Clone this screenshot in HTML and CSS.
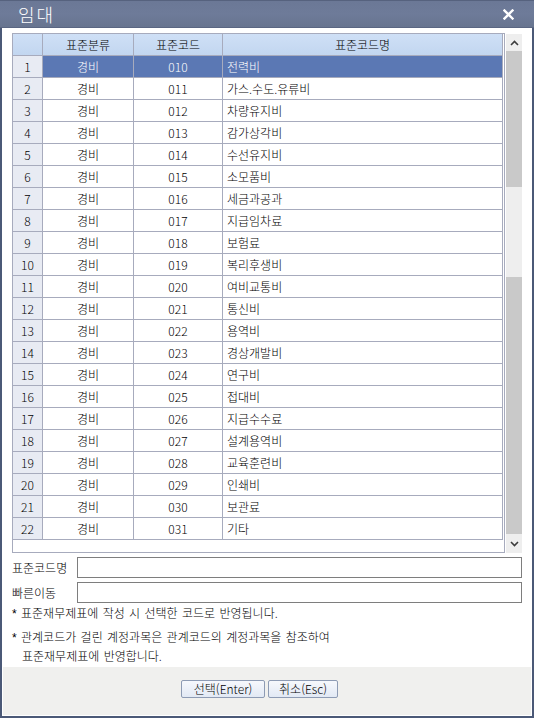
FILE: index.html
```html
<!DOCTYPE html>
<html lang="ko">
<head>
<meta charset="utf-8">
<title>임대</title>
<link rel="stylesheet" href="styles.css">
</head>
<body>
<div class="window">
  <div class="titlebar">
    <span class="title">임대</span>
    <svg class="close" width="11" height="11" viewBox="0 0 11 11"><path d="M1.5 1.5 L9.5 9.5 M9.5 1.5 L1.5 9.5" stroke="#fff" stroke-width="2.4" stroke-linecap="square" fill="none"/></svg>
  </div>
  <div class="body">
    <div class="gridwrap">
      <div class="grid">
        <div class="row head"><div class="c n"></div><div class="c">표준분류</div><div class="c">표준코드</div><div class="c">표준코드명</div></div>
        <div class="row sel"><div class="c n">1</div><div class="c">경비</div><div class="c">010</div><div class="c nm">전력비</div></div>
        <div class="row"><div class="c n">2</div><div class="c">경비</div><div class="c">011</div><div class="c nm">가스.수도.유류비</div></div>
        <div class="row"><div class="c n">3</div><div class="c">경비</div><div class="c">012</div><div class="c nm">차량유지비</div></div>
        <div class="row"><div class="c n">4</div><div class="c">경비</div><div class="c">013</div><div class="c nm">감가상각비</div></div>
        <div class="row"><div class="c n">5</div><div class="c">경비</div><div class="c">014</div><div class="c nm">수선유지비</div></div>
        <div class="row"><div class="c n">6</div><div class="c">경비</div><div class="c">015</div><div class="c nm">소모품비</div></div>
        <div class="row"><div class="c n">7</div><div class="c">경비</div><div class="c">016</div><div class="c nm">세금과공과</div></div>
        <div class="row"><div class="c n">8</div><div class="c">경비</div><div class="c">017</div><div class="c nm">지급임차료</div></div>
        <div class="row"><div class="c n">9</div><div class="c">경비</div><div class="c">018</div><div class="c nm">보험료</div></div>
        <div class="row"><div class="c n">10</div><div class="c">경비</div><div class="c">019</div><div class="c nm">복리후생비</div></div>
        <div class="row"><div class="c n">11</div><div class="c">경비</div><div class="c">020</div><div class="c nm">여비교통비</div></div>
        <div class="row"><div class="c n">12</div><div class="c">경비</div><div class="c">021</div><div class="c nm">통신비</div></div>
        <div class="row"><div class="c n">13</div><div class="c">경비</div><div class="c">022</div><div class="c nm">용역비</div></div>
        <div class="row"><div class="c n">14</div><div class="c">경비</div><div class="c">023</div><div class="c nm">경상개발비</div></div>
        <div class="row"><div class="c n">15</div><div class="c">경비</div><div class="c">024</div><div class="c nm">연구비</div></div>
        <div class="row"><div class="c n">16</div><div class="c">경비</div><div class="c">025</div><div class="c nm">접대비</div></div>
        <div class="row"><div class="c n">17</div><div class="c">경비</div><div class="c">026</div><div class="c nm">지급수수료</div></div>
        <div class="row"><div class="c n">18</div><div class="c">경비</div><div class="c">027</div><div class="c nm">설계용역비</div></div>
        <div class="row"><div class="c n">19</div><div class="c">경비</div><div class="c">028</div><div class="c nm">교육훈련비</div></div>
        <div class="row"><div class="c n">20</div><div class="c">경비</div><div class="c">029</div><div class="c nm">인쇄비</div></div>
        <div class="row"><div class="c n">21</div><div class="c">경비</div><div class="c">030</div><div class="c nm">보관료</div></div>
        <div class="row"><div class="c n">22</div><div class="c">경비</div><div class="c">031</div><div class="c nm">기타</div></div>
      </div>
      <div class="scrollbar">
        <div class="sbtn"><svg width="9" height="6" viewBox="0 0 9 6"><path d="M1 5 L4.5 1.5 L8 5" stroke="#3c3c3c" stroke-width="1.6" fill="none"/></svg></div>
        <div class="track t1"></div>
        <div class="thumb"></div>
        <div class="track t2"></div>
        <div class="sbtn down"><svg width="9" height="6" viewBox="0 0 9 6"><path d="M1 1 L4.5 4.5 L8 1" stroke="#3c3c3c" stroke-width="1.6" fill="none"/></svg></div>
      </div>
    </div>
    <div class="field"><span class="label">표준코드명</span><div class="input"></div></div>
    <div class="field"><span class="label">빠른이동</span><div class="input"></div></div>
    <p class="note first"><span class="star">*</span> 표준재무제표에 작성 시 선택한 코드로 반영됩니다.</p>
    <p class="note"><span class="star">*</span> 관계코드가 걸린 계정과목은 관계코드의 계정과목을 참조하여<br><span class="indent">표준재무제표에 반영합니다.</span></p>
    <div class="footer">
      <button class="btn ok">선택(Enter)</button>
      <button class="btn cancel">취소(Esc)</button>
    </div>
  </div>
</div>
</body>
</html>
```
FILE: styles.css
```css
* { box-sizing: border-box; }
html, body { margin: 0; padding: 0; }
body {
  font-family: "Noto Sans CJK KR", "Liberation Sans", sans-serif;
  font-size: 12px;
  font-weight: 300;
  color: #000;
  background: #fff;
}
.window {
  width: 534px;
  height: 718px;
  background: #4b5977;
  display: flex;
  flex-direction: column;
}
.titlebar {
  height: 28px;
  flex: none;
  background: linear-gradient(#6b7896, #6e7b99 50%, #67748f);
  border-top: 1px solid #56627e;
  border-bottom: 1px solid #5a6682;
  display: flex;
  align-items: center;
  justify-content: space-between;
  padding: 0 20px 0 18px;
  color: #fff;
}
.title {
  font-size: 18px;
  font-weight: 300;
  letter-spacing: 2px;
  line-height: 20px;
  margin-top: -1px;
}
.close { display: block; margin-top: 1px; }
.body {
  flex: 1;
  margin: 0 2px 2px 2px;
  background: #fff;
  padding: 5px 10px 0 10px;
  display: flex;
  flex-direction: column;
}
.gridwrap {
  display: flex;
  gap: 1px;
  height: 520px;
  flex: none;
}
.grid {
  width: 493px;
  height: 520px;
  border: 1px solid #a7abbd;
  background: #fff;
}
.row {
  display: grid;
  grid-template-columns: 30px 91px 89px 280px;
  height: 22px;
}
.c {
  border-right: 1px solid #a7abbd;
  border-bottom: 1px solid #a7abbd;
  display: flex;
  align-items: center;
  justify-content: center;
  line-height: 20px;
  white-space: nowrap;
}
.c.n { background: #e8ebf3; }
.c.nm { justify-content: flex-start; padding-left: 4px; }
.head .c { background: linear-gradient(#cfe0f6, #c2d6f0); }
.head .c.n { background: linear-gradient(#cfe0f6, #c2d6f0); }
.sel .c { background: #5b78b4; color: #fff; }
.sel .c.n { background: #e8ebf3; color: #000; }
.scrollbar {
  width: 16px;
  margin-top: 1px;
  height: 519px;
  display: flex;
  flex-direction: column;
}
.sbtn {
  height: 17px;
  flex: none;
  background: #eeeeee;
  display: flex;
  align-items: center;
  justify-content: center;
}
.sbtn.down { height: 19px; }
.track { background: #c9c9c9; flex: none; }
.t1 { height: 136px; }
.thumb { height: 90px; background: #eeeeee; flex: none; }
.t2 { flex: 1; }
.field {
  display: flex;
  align-items: center;
  height: 21px;
  margin-top: 4px;
  flex: none;
}
.label { width: 65px; flex: none; }
.input {
  width: 445px;
  height: 21px;
  border: 1px solid #7e7e7e;
  background: #fff;
}
.note {
  margin: 5px 0 0 0;
  line-height: 18px;
  white-space: nowrap;
  word-spacing: 1px;
}
.note.first { margin-top: 1px; }
.star { font-family: "Liberation Sans", sans-serif; font-weight: 400; }
.indent { padding-left: 10px; }
.footer {
  margin: auto -9px 1px -9px;
  height: 48px;
  flex: none;
  background: #f0f0ee;
  display: flex;
  justify-content: center;
  align-items: flex-start;
  gap: 3px;
  padding: 13px 15px 0 0;
}
.btn {
  font-family: "Noto Sans CJK KR", "Liberation Sans", sans-serif;
  font-size: 12px;
  font-weight: 300;
  height: 18px;
  padding: 0;
  border: 1px solid #8d9bb4;
  border-radius: 2px;
  background: linear-gradient(#f6f8fc, #e2e9f4);
  color: #000;
  line-height: 16px;
}
.btn.ok { width: 84px; }
.btn.cancel { width: 70px; }
```
